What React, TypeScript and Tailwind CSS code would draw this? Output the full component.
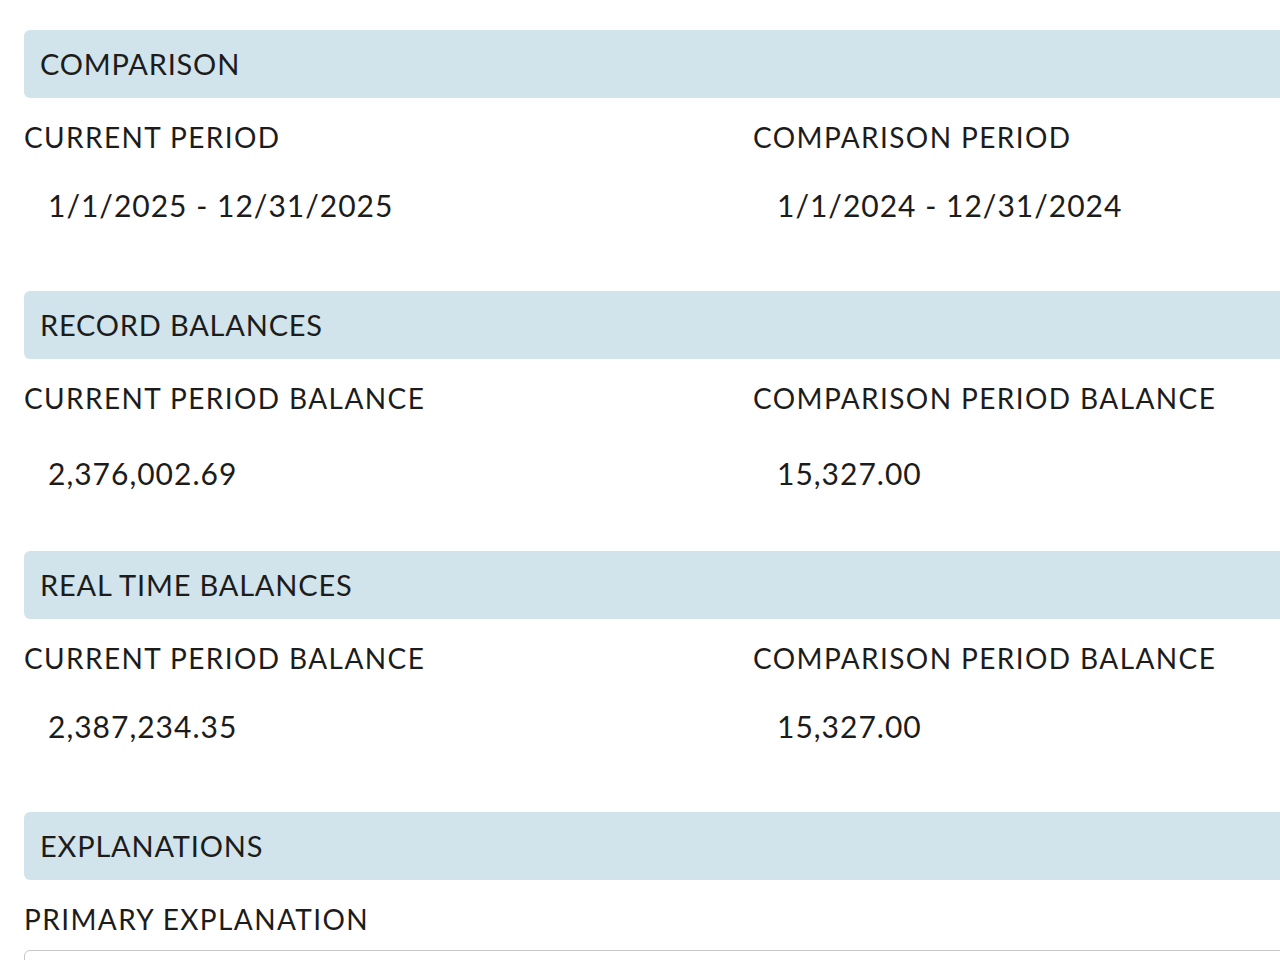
const font = { fontFamily: 'Lato, "Open Sans", sans-serif' }

interface Field {
  label: string
  value: string
}

interface SectionProps {
  title: string
  fields: Field[]
  valueTop: string
  height: string
}

const SectionBar = ({ title }: { title: string }) => (
  <div className="h-[68px] w-[1456px] rounded-md bg-[#d1e4eb] flex items-center pl-4">
    <span className="text-[29px] text-[#1c1c1c] leading-none tracking-[0.8px] -translate-y-px">
      {title}
    </span>
  </div>
)

const Section = ({ title, fields, valueTop, height }: SectionProps) => (
  <section className={height}>
    <SectionBar title={title} />
    <div className="grid grid-cols-[729px_729px]">
      {fields.map(f => (
        <div key={f.label}>
          <div className="h-[78px] flex items-center text-[28px] text-[#1c1c1c] tracking-[1.4px]">
            {f.label}
          </div>
          <div
            className={`pl-6 text-[30px] text-[#1c1c1c] leading-[40px] tracking-[1px] ${valueTop}`}
          >
            {f.value}
          </div>
        </div>
      ))}
    </div>
  </section>
)

export default function App() {
  return (
    <div className="w-[1280px] h-[960px] overflow-hidden bg-white" style={font}>
      <div className="pl-6 pt-[30px] w-[1480px]">
        <Section
          title="COMPARISON"
          height="h-[261px]"
          valueTop="pt-[9px]"
          fields={[
            { label: 'CURRENT PERIOD', value: '1/1/2025 - 12/31/2025' },
            { label: 'COMPARISON PERIOD', value: '1/1/2024 - 12/31/2024' }
          ]}
        />
        <Section
          title="RECORD BALANCES"
          height="h-[260px]"
          valueTop="pt-[16px]"
          fields={[
            { label: 'CURRENT PERIOD BALANCE', value: '2,376,002.69' },
            { label: 'COMPARISON PERIOD BALANCE', value: '15,327.00' }
          ]}
        />
        <Section
          title="REAL TIME BALANCES"
          height="h-[261px]"
          valueTop="pt-[9px]"
          fields={[
            { label: 'CURRENT PERIOD BALANCE', value: '2,387,234.35' },
            { label: 'COMPARISON PERIOD BALANCE', value: '15,327.00' }
          ]}
        />
        <section>
          <SectionBar title="EXPLANATIONS" />
          <div className="h-[78px] flex items-center text-[28px] text-[#1c1c1c] tracking-[1.4px]">
            PRIMARY EXPLANATION
          </div>
          <div className="mt-[-8px] h-[120px] w-[1456px] rounded-md border border-[#c8c8c8] bg-white" />
        </section>
      </div>
    </div>
  )
}
